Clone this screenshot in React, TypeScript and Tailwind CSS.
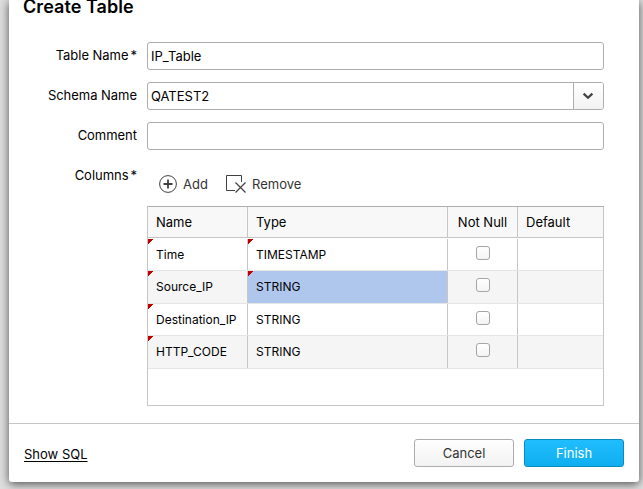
import type { ReactNode } from "react";

type Column = { name: string; type: string; nameDirty: boolean; typeDirty: boolean; height: string; selected?: boolean };

const columns: Column[] = [
  { name: "Time", type: "TIMESTAMP", nameDirty: true, typeDirty: true, height: "h-8" },
  { name: "Source_IP", type: "STRING", nameDirty: true, typeDirty: true, height: "h-[33px]", selected: true },
  { name: "Destination_IP", type: "STRING", nameDirty: true, typeDirty: false, height: "h-8" },
  { name: "HTTP_CODE", type: "STRING", nameDirty: true, typeDirty: false, height: "h-[33px]" },
];

const grid = "grid grid-cols-[100px_200px_70px_85px]";

function Field({ label, children }: { label: ReactNode; children: ReactNode }) {
  return (
    <div className="flex h-7">
      <div className="w-[128px] pt-1 text-right leading-[19px] tracking-[-0.03px]">{label}</div>
      <div className="ml-[10px] flex w-[457px]">{children}</div>
    </div>
  );
}

function Star() {
  return <span className="ml-[2px]">*</span>;
}

function DirtyMark() {
  return (
    <svg className="absolute left-0 top-0" width="5" height="5" viewBox="0 0 5 5" shapeRendering="crispEdges">
      <path d="M0 0h5v1H4v1H3v1H2v1H1v1H0z" fill="#c00000" />
    </svg>
  );
}

function Cell({ text, dirty, selected }: { text: string; dirty: boolean; selected?: boolean }) {
  return (
    <div className={`relative flex items-center border-r border-[#c6c6c6] pl-2 text-[12px] ${selected ? "bg-[#b0c7ed]" : ""}`}>
      {dirty && <DirtyMark />}
      <span>{text}</span>
    </div>
  );
}

export default function App() {
  return (
    <div className="h-[489px] w-[643px] overflow-hidden bg-[#dedede] pl-[9px] font-['Inter','Liberation_Sans',sans-serif] text-[13px] text-black">
      <div className="flex h-[482px] w-[630px] flex-col rounded-b-[3px] bg-white shadow-[0_2px_10px_0_rgba(0,0,0,0.65)]">
        <h1 className="-mt-[5px] ml-[14px] h-[47px] text-[18px] font-semibold leading-6 tracking-[0.06px]">Create Table</h1>
        <div className="flex flex-col gap-3">
          <Field label={<>Table Name<Star /></>}>
            <div className="flex w-full items-center rounded-[3px] border border-[#adadad] pl-[3px] pt-[2px]">IP_Table</div>
          </Field>
          <Field label="Schema Name">
            <div className="flex w-full overflow-hidden rounded-[3px] border border-[#adadad]">
              <span className="flex flex-1 items-center pl-[3px] pt-[2px]">QATEST2</span>
              <div className="flex w-[30px] items-center justify-center border-l border-[#adadad] bg-linear-to-b from-white to-[#f2f2f2] pr-[2px]">
                <svg width="12" height="8" viewBox="0 0 12 8"><path d="M1.600 1.700 6 5.800 10.400 1.700" fill="none" stroke="#444" strokeWidth="2.3" /></svg>
              </div>
            </div>
          </Field>
          <Field label="Comment">
            <div className="w-full rounded-[3px] border border-[#adadad]" />
          </Field>
        </div>
        <div className="mt-[12px] flex">
          <div className="w-[128px] pt-1 text-right leading-[19px] tracking-[-0.03px]">Columns<Star /></div>
          <div className="ml-[10px] w-[457px]">
            <div className="flex h-11 items-center pl-3 text-[#333]">
              <svg width="18" height="18" viewBox="0 0 18 18" fill="none" stroke="#404040">
                <circle cx="9" cy="9" r="8.4" />
                <path d="M4.5 9h9M9 4.5v9" strokeWidth="1.8" />
              </svg>
              <span className="ml-[6px] w-[25px] pt-[2px]">Add</span>
              <svg className="ml-[18px]" width="20" height="18" viewBox="0 0 20 18" fill="none" stroke="#404040">
                <path d="M9 15.500H.5V.5h15V7" />
                <path d="m9.5 7.500 10 10M19.500 7.500l-10 10" strokeWidth="1.2" />
              </svg>
              <span className="ml-[6px] pt-[2px]">Remove</span>
            </div>
            <div className="h-[200px] border border-[#c6c6c6] border-t-[#adadad]">
              <div className={`${grid} mb-px h-[31px] border-b border-[#c6c6c6] bg-[#f8f8f8] leading-[31px]`}>
                <div className="border-r border-[#c6c6c6] pl-2">Name</div>
                <div className="border-r border-[#c6c6c6] pl-2">Type</div>
                <div className="border-r border-[#c6c6c6] text-center">Not Null</div>
                <div className="pl-2">Default</div>
              </div>
              {columns.map((column, index) => (
                <div key={column.name} className={`${grid} ${column.height} border-b border-[#e5e5e5] ${index % 2 ? "bg-[#f5f5f5]" : ""}`}>
                  <Cell text={column.name} dirty={column.nameDirty} />
                  <Cell text={column.type} dirty={column.typeDirty} selected={column.selected} />
                  <div className="flex justify-center border-r border-[#c6c6c6] pt-[7px]">
                    <div className="h-[14px] w-[14px] rounded-[3px] border border-[#a5a5a5] bg-linear-to-b from-white to-[#f4f4f4]" />
                  </div>
                  <div />
                </div>
              ))}
            </div>
          </div>
        </div>
        <div className="mt-[17px] flex h-[59px] items-start border-t border-[#c6c6c6] pl-[15px] pr-[15px] pt-[15px]">
          <span className="mt-[6px] leading-[19px] underline underline-offset-2">Show SQL</span>
          <button className="ml-auto h-7 w-[100px] rounded-[3px] border border-[#adadad] bg-linear-to-b from-white to-[#f2f2f2] pt-[2px] text-[#333]">Cancel</button>
          <button className="ml-[10px] h-7 w-[100px] rounded-[3px] border border-[#098bc0] bg-linear-to-b from-[#20bdff] to-[#0eaeef] pt-[2px] text-white">Finish</button>
        </div>
      </div>
    </div>
  );
}
